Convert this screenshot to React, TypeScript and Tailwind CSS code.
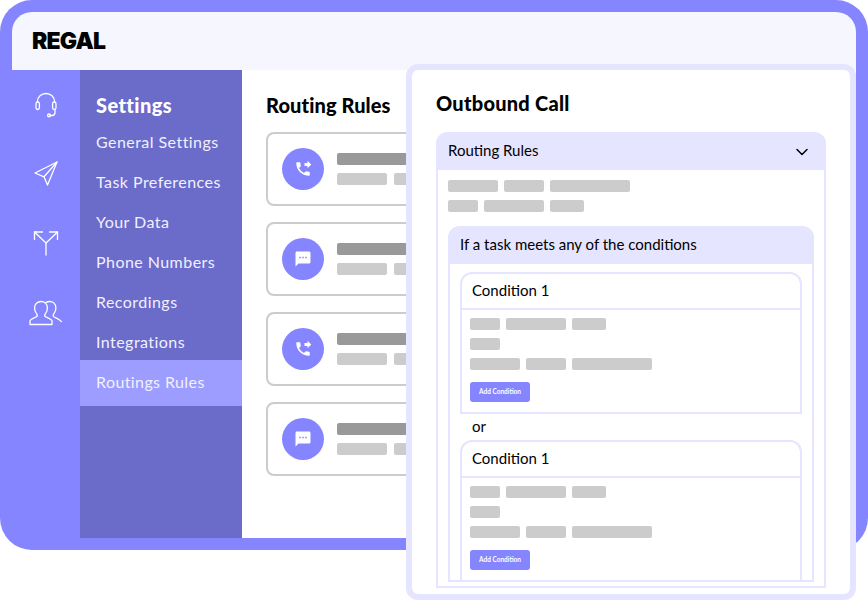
import React from "react";
import { MdPhoneForwarded, MdSms } from "react-icons/md";

const font = { fontFamily: '"Lato", "Noto Sans", sans-serif' };

const Bar = ({ w, dark }: { w: number; dark?: boolean }) => (
  <div
    className={`h-3 shrink-0 rounded-[2px] ${dark ? "bg-[#999999]" : "bg-[#cccccc]"}`}
    style={{ width: w }}
  />
);

const Row = ({ items }: { items: number[] }) => (
  <div className="flex gap-[6px]">
    {items.map((w, i) => (
      <Bar key={i} w={w} />
    ))}
  </div>
);

const Headset = () => (
  <svg width="24" height="26" viewBox="0 0 24 26" fill="none" stroke="white" strokeWidth="1.3" strokeLinecap="round" strokeLinejoin="round">
    <path d="M3.500 10V9.500a8.500 8 0 0 1 17 0V10" />
    <rect x="2" y="10" width="3.400" height="7.500" rx="1.700" />
    <rect x="18.600" y="10" width="3.400" height="7.500" rx="1.700" />
    <path d="M21 17.500v3a3 3 0 0 1-3 3h-2" />
    <circle cx="15" cy="23.400" r="1.400" />
  </svg>
);

const Send = () => (
  <svg width="24" height="25" viewBox="0 0 24 25" fill="none" stroke="white" strokeWidth="1.3" strokeLinecap="round" strokeLinejoin="round">
    <path d="M23 1 1 12l9 3.800L13.500 24 23 1Z" />
    <path d="M23 1 10 15.800" />
  </svg>
);

const Split = () => (
  <svg width="28" height="26" viewBox="0 0 28 26" fill="none" stroke="white" strokeWidth="1.3" strokeLinecap="round" strokeLinejoin="round">
    <path d="M14 25V13L2.500 2" />
    <path d="M14 13 25.500 2" />
    <path d="M2.500 9.500V2h8" />
    <path d="M17.500 2h8v7.500" />
  </svg>
);

const Users = () => (
  <svg width="34" height="26" viewBox="0 0 34 26" fill="none" stroke="white" strokeWidth="1.3" strokeLinecap="round" strokeLinejoin="round">
    <path d="M1 24.500h22v-3.500c0-2-5.500-3.200-6.800-4.400-.8-.8-.6-2 .4-3.200 1.300-1.600 1.800-3.600 1.800-5.600C18.400 4 15.600 1.500 12 1.500S5.600 4 5.600 7.800c0 2 .5 4 1.800 5.600 1 1.200 1.200 2.400.4 3.200C6.500 17.800 1 19 1 21v3.500Z" />
    <path d="M17 2.500c1-.7 2.300-1 3.500-1 3.600 0 6.400 2.500 6.400 6.300 0 2-.5 4-1.800 5.600-1 1.200-1.200 2.400-.4 3.200 1.200 1.200 5 2 7.800 5" />
  </svg>
);

const navItems = ["General Settings", "Task Preferences", "Your Data", "Phone Numbers", "Recordings", "Integrations"];

const RuleCard = ({ kind }: { kind: "phone" | "sms" }) => (
  <div className="flex h-[74px] w-[300px] shrink-0 items-center gap-[13px] rounded-lg border-2 border-[#cccccc] pl-[14px]">
    <div className="flex h-[42px] w-[42px] shrink-0 items-center justify-center rounded-full bg-[#8585ff] text-white">
      {kind === "phone" ? <MdPhoneForwarded size={18} /> : <MdSms size={18} />}
    </div>
    <div className="flex flex-col gap-2">
      <Bar w={160} dark />
      <div className="flex gap-[7px]">
        <Bar w={50} />
        <Bar w={50} />
      </div>
    </div>
  </div>
);

const Condition = ({ last }: { last?: boolean }) => (
  <div className={`rounded-t-xl border-x-2 border-t-2 border-[#e5e5ff] ${last ? "" : "border-b-2"}`}>
    <div className="flex h-[36px] items-center border-b-2 border-[#e5e5ff] pb-[2px] pl-[10px] text-[15px] text-black">Condition 1</div>
    <div className="flex flex-col gap-2 pl-2 pt-2 pb-[10px]">
      <Row items={[30, 60, 34]} />
      <Row items={[30]} />
      <Row items={[50, 40, 80]} />
      <button className="mt-1 flex h-5 w-[60px] items-center justify-center rounded-[3px] bg-[#8585ff] text-[6.500px] font-bold text-white">
        Add Condition
      </button>
    </div>
  </div>
);

export default function App() {
  return (
    <div className="relative h-[600px] w-[868px] overflow-hidden bg-white" style={font}>
      <div className="flex h-[550px] flex-col rounded-[32px] bg-[#8585ff] pt-3 pr-3 pb-3">
        <header className="ml-3 flex h-[58px] shrink-0 items-center rounded-t-[20px] bg-[#f6f6ff] pl-5">
          <span className="text-[23px] leading-none font-black tracking-[-0.8px] text-black" style={{ fontFamily: '"Inter", sans-serif' }}>
            REGAL
          </span>
        </header>
        <div className="flex min-h-0 flex-1">
          <aside className="flex w-20 shrink-0 flex-col pl-3 text-white">
            <div className="flex h-[69px] items-center justify-center"><Headset /></div>
            <div className="flex h-[69px] items-center justify-center"><Send /></div>
            <div className="flex h-[70px] items-center justify-center"><Split /></div>
            <div className="flex h-[69px] items-center justify-center"><Users /></div>
          </aside>
          <nav className="flex w-[162px] shrink-0 flex-col bg-[#6b6bca] text-white">
            <div className="flex h-[50px] items-end pb-[5px] pl-4 text-[20px] leading-none font-black tracking-[0.4px]">Settings</div>
            {navItems.map((t) => (
              <div key={t} className="flex h-10 items-center pl-4 pt-[4px] text-[16px] tracking-[0.45px] text-[#f0f0ff]">
                {t}
              </div>
            ))}
            <div className="flex h-[46px] items-center bg-[#9d9dff] pb-[2px] pl-4 text-[16px] tracking-[0.4px] text-[#f0f0ff]">
              Routings Rules
            </div>
          </nav>
          <main className="min-w-0 flex-1 overflow-hidden bg-white pl-6 pt-[22px]">
            <h1 className="mb-[14px] h-[26px] text-[20px] leading-[26px] font-black tracking-[0.1px] text-black">Routing Rules</h1>
            <div className="flex flex-col gap-4">
              <RuleCard kind="phone" />
              <RuleCard kind="sms" />
              <RuleCard kind="phone" />
              <RuleCard kind="sms" />
            </div>
          </main>
        </div>
      </div>

      <section className="absolute top-16 left-[406px] h-[536px] w-[450px] rounded-xl border-[6px] border-[#e5e5ff] bg-white pt-5 pl-6 pr-6">
        <h2 className="mb-4 h-[26px] text-[20px] leading-[26px] font-black tracking-[0.25px] text-black">Outbound Call</h2>
        <div className="flex h-[456px] flex-col rounded-t-xl border-x-2 border-b-2 border-[#e5e5ff]">
          <div className="-mx-[2px] flex h-[38px] shrink-0 items-center justify-between rounded-t-xl bg-[#e5e5ff] pr-4 pb-[2px] pl-3 text-[15px] text-black">
            Routing Rules
            <svg width="16" height="16" viewBox="0 0 16 16" fill="none" stroke="black" strokeWidth="1.500" strokeLinecap="round" strokeLinejoin="round" className="mt-[3px]">
              <path d="M3 5.500 8 10.500l5-5" />
            </svg>
          </div>
          <div className="flex flex-col gap-2 pt-[10px] pl-[10px]">
            <Row items={[50, 40, 80]} />
            <Row items={[30, 60, 34]} />
          </div>
          <div className="mx-[10px] mt-[14px] flex h-[356px] flex-col rounded-t-xl border-x-2 border-b-2 border-[#e5e5ff]">
            <div className="-mx-[2px] flex h-[38px] shrink-0 items-center rounded-t-xl bg-[#e5e5ff] pb-[2px] pl-3 text-[15px] text-black">
              If a task meets any of the conditions
            </div>
            <div className="flex flex-col px-[10px] pt-2">
              <Condition />
              <div className="flex h-[26px] items-center pb-[2px] pl-3 text-[15px] text-black">or</div>
              <Condition last />
            </div>
          </div>
        </div>
      </section>
    </div>
  );
}
